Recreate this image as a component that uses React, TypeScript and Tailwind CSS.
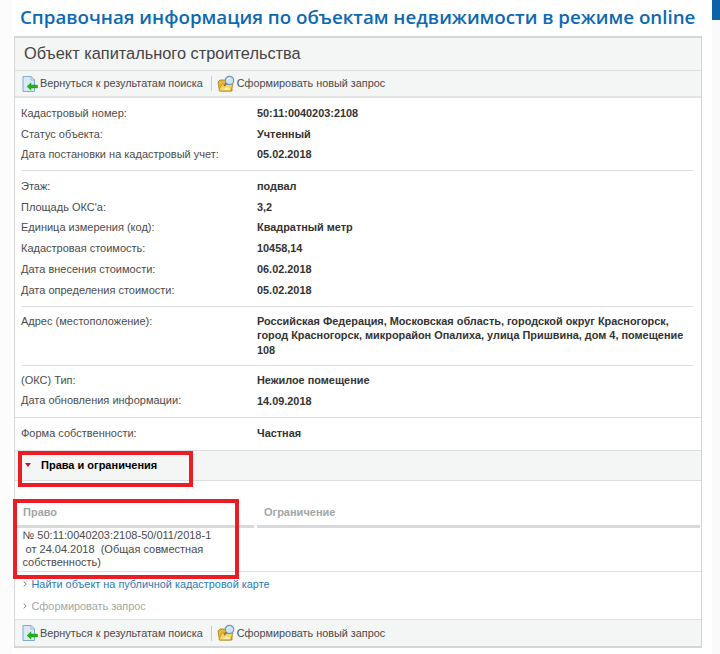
const sans = "font-['Liberation_Sans',Arial,sans-serif]";

function BackIcon() {
  return (
    <svg width="16" height="18" viewBox="0 0 16 18" className="shrink-0">
      <path d="M1 1.5h8l3.5 3.5v11.5H1z" fill="#dbe9f7" stroke="#7fa8d2" strokeWidth="1" />
      <path d="M9 1.5V5h3.5z" fill="#f5f9fd" stroke="#7fa8d2" strokeWidth="0.8" />
      <path d="M5 11.5l4-3.7v2.2h6.5v3H9v2.2z" fill="#1fb512" stroke="#178a0e" strokeWidth="0.4" />
    </svg>
  );
}

function QueryIcon() {
  return (
    <svg width="19" height="18" viewBox="0 0 19 18" className="shrink-0">
      <path d="M1 7l2-2h6l1.5 2H15v9H2.5z" fill="#e8b93a" stroke="#a87b14" strokeWidth="0.8" />
      <path d="M2 15l3-6h11l-2.5 7H2.5z" fill="#f7d766" stroke="#b8891c" strokeWidth="0.8" />
      <path d="M6 15l4-3 4 3z" fill="#fdf0b0" />
      <circle cx="12.5" cy="5.5" r="4.2" fill="#cfe4f7" stroke="#6d9ac4" strokeWidth="1.2" />
      <path d="M10.5 5c.3-1.2 1.2-1.8 2.4-1.8" fill="none" stroke="#ffffff" strokeWidth="1" />
      <path d="M9.5 8.5l-2.5 2.5" stroke="#7a6a3a" strokeWidth="1.6" />
    </svg>
  );
}

function Toolbar({ className }: { className: string }) {
  return (
    <div className={`flex items-center h-[27px] pl-[7px] bg-[#f4f5f5] text-[10.85px] text-[#4a4a4a] ${className}`}>
      <BackIcon />
      <span className="ml-[2px]">Вернуться к результатам поиска</span>
      <span className="w-px h-[15px] bg-[#c9cccc] ml-[8px] mr-[5px]" />
      <QueryIcon />
      <span className="ml-[1px]">Сформировать новый запрос</span>
    </div>
  );
}

function Row({ label, value, h = "h-[20.8px]" }: { label: string; value: string; h?: string }) {
  return (
    <div className={`flex items-center ${h} pl-[6px]`}>
      <div className="w-[236px] shrink-0 text-[#4c4c4c]">{label}</div>
      <div className="font-bold text-[10.9px] text-[#333]">{value}</div>
    </div>
  );
}

function Chevron() {
  return (
    <svg width="4" height="6" viewBox="0 0 4 6" className="mr-[5px] shrink-0">
      <path d="M0.7 0.6L3.2 3L0.7 5.4" fill="none" stroke="#8a8a8a" strokeWidth="1" />
    </svg>
  );
}

export default function App() {
  return (
    <div className={`relative w-[720px] h-[654px] overflow-hidden bg-white ${sans}`}>
      <div className="absolute left-0 top-0 w-[12px] h-[654px] bg-[#fcfcfc]" />
      <div className="absolute right-0 top-0 w-[8px] h-[20px] bg-[#0c62a8]" />
      <div className="absolute right-0 top-[20px] w-[8px] h-[634px] bg-[#fafafa]" />
      <h1 className="relative pt-[3px] pl-[20px] h-[36px] text-[18.73px] leading-[28px] font-semibold text-[#0d69b2] whitespace-nowrap font-['Open_Sans',sans-serif]">
        Справочная информация по объектам недвижимости в режиме online
      </h1>
      <div className="relative ml-[14px] w-[688px] h-[612px] border-y-2 border-x border-[#d4d6d6] text-[11px]">
        <div className="h-[33px] flex items-center pl-[9px] pb-[2px] text-[16.35px] text-[#444] bg-[#f4f5f5] border-b border-[#dcdede]">
          Объект капитального строительства
        </div>
        <Toolbar className="border-b-2 border-[#e2e4e4]" />
        <div className="pt-[4.6px]">
          <Row label="Кадастровый номер:" value="50:11:0040203:2108" />
          <Row label="Статус объекта:" value="Учтенный" />
          <Row label="Дата постановки на кадастровый учет:" value="05.02.2018" />
        </div>
        <div className="h-px mt-[5px] ml-[7px] mr-[8px] bg-[#dcdede]" />
        <div className="pt-[4.6px]">
          <Row label="Этаж:" value="подвал" />
          <Row label="Площадь ОКС'а:" value="3,2" />
          <Row label="Единица измерения (код):" value="Квадратный метр" />
          <Row label="Кадастровая стоимость:" value="10458,14" />
          <Row label="Дата внесения стоимости:" value="06.02.2018" />
          <Row label="Дата определения стоимости:" value="05.02.2018" />
        </div>
        <div className="h-px mt-[5.6px] ml-[7px] mr-[8px] bg-[#dcdede]" />
        <div className="flex pl-[6px] pt-[6.75px] h-[58px] leading-[14.5px]">
          <div className="w-[236px] shrink-0 text-[#4c4c4c]">Адрес (местоположение):</div>
          <div className="w-[436px] font-bold text-[10.9px] text-[#333]">
            Российская Федерация, Московская область, городской округ Красногорск, город Красногорск, микрорайон Опалиха, улица Пришвина, дом 4, помещение 108
          </div>
        </div>
        <div className="h-px ml-[7px] mr-[8px] bg-[#dcdede]" />
        <div className="pt-[3.6px]">
          <Row label="(ОКС) Тип:" value="Нежилое помещение" />
          <Row label="Дата обновления информации:" value="14.09.2018" />
        </div>
        <div className="h-px mt-[5.8px] bg-[#dcdede]" />
        <Row label="Форма собственности:" value="Частная" h="h-[31px]" />
        <div className="mt-[1px] h-[31px] flex items-center pl-[10px] bg-[#f4f5f5] border-y border-[#dcdede]">
          <span className="w-0 h-0 border-x-[3.5px] border-x-transparent border-t-[4px] border-t-[#c4122f]" />
          <span className="ml-[10px] font-bold text-black -mt-[1px]">Права и ограничения</span>
        </div>
        <div className="flex pt-[24px] px-[1px] gap-[3px] leading-[15px]">
          <div className="w-[238px] h-[23px] pl-[7px] font-bold text-[#a3a6a6] border-b-[3px] border-[#d8dada]">Право</div>
          <div className="flex-1 h-[23px] pl-[7px] font-bold text-[#a3a6a6] border-b-[3px] border-[#d8dada]">Ограничение</div>
        </div>
        <div className="pl-[7.5px] pt-[1px] h-[43px] leading-[13.7px] text-[#4a4a4a] whitespace-pre">
          {"№ 50:11:0040203:2108-50/011/2018-1\n от 24.04.2018  (Общая совместная\nсобственность)"}
        </div>
        <div className="h-px bg-[#dcdede]" />
        <div className="flex items-center h-[23px] pl-[7.5px] pt-[1px] text-[10.9px] text-[#2a7ab8]">
          <Chevron />Найти объект на публичной кадастровой карте
        </div>
        <div className="flex items-center h-[22px] pl-[7.5px] pt-[1px] text-[10.9px] text-[#a3a6a6]">
          <Chevron />Сформировать запрос
        </div>
        <Toolbar className="border-t border-[#dcdede] mt-[2px] pt-[1px]" />
      </div>
      <div className="absolute left-[18px] top-[451px] w-[175px] h-[36px] border-[4px] border-[#ec1c24]" />
      <div className="absolute left-[13px] top-[499px] w-[226px] h-[80px] border-[4px] border-[#ec1c24]" />
    </div>
  );
}
